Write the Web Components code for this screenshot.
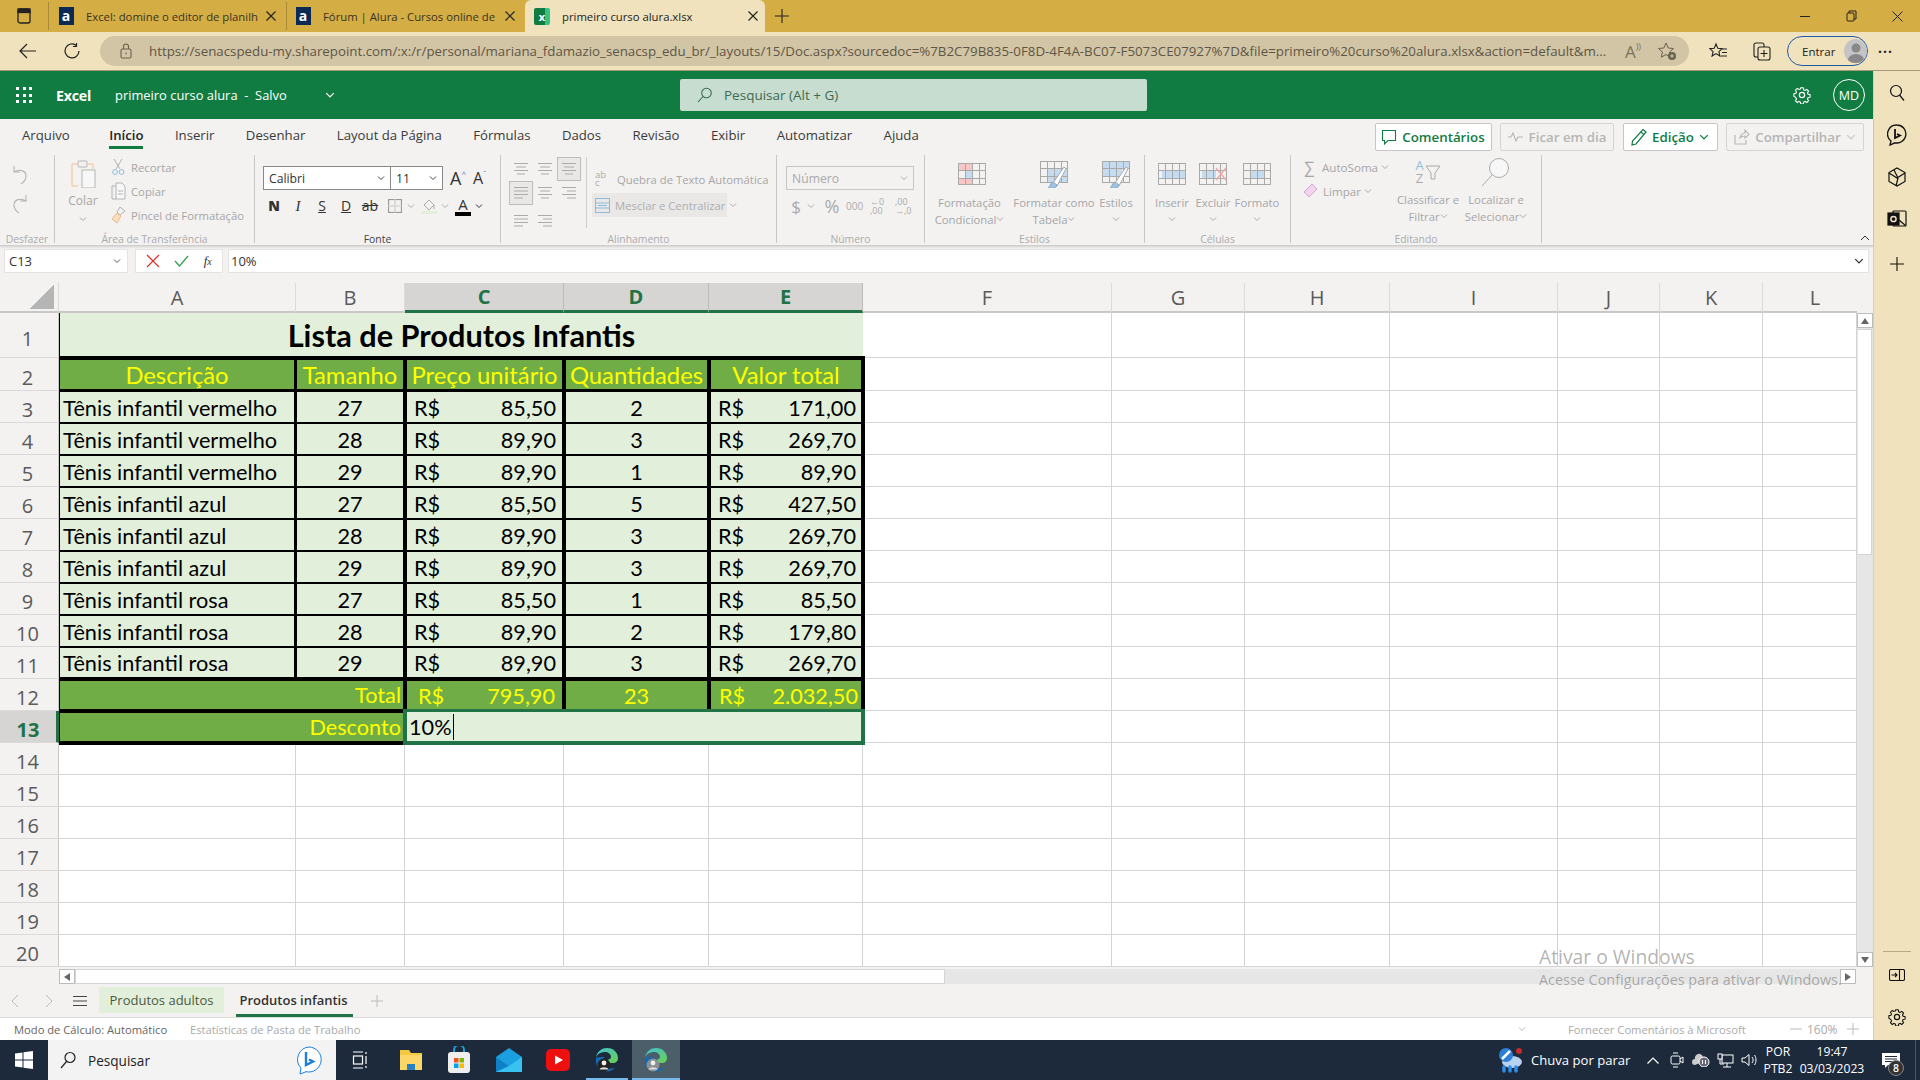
<!DOCTYPE html>
<html lang="pt-BR"><head><meta charset="utf-8"><title>primeiro curso alura.xlsx</title>
<style>
html,body{margin:0;padding:0;width:1920px;height:1080px;overflow:hidden;background:#f3f2f1}
body{display:flex;flex-direction:column;font-family:"Open Sans","Noto Sans",sans-serif}
#mid{display:flex;height:969px}
#app{display:flex;flex-direction:column;width:1873px;position:relative}
</style></head><body>
<x-tabstrip></x-tabstrip>
<x-toolbar></x-toolbar>
<div id="mid"><div id="app">
<x-appbar></x-appbar><x-ribbon></x-ribbon><x-formula></x-formula><x-sheet></x-sheet><x-sheettabs></x-sheettabs><x-status></x-status>
<x-watermark></x-watermark>
</div><x-sidebar></x-sidebar></div>
<x-taskbar></x-taskbar>
<script>
const base=`*{box-sizing:border-box}svg{display:block;flex:none}:host{display:block;box-sizing:border-box}`;
function el(name,css,html){customElements.define(name,class extends HTMLElement{
 constructor(){super();const s=this.attachShadow({mode:'open'});s.innerHTML=`<style>${base}${css}</style>${typeof html==='function'?html(this):html}`}})}
const svg=(w,h,b,c='currentColor',sw=1,vb)=>`<svg width="${w}" height="${h}" viewBox="${vb||`0 0 ${w} ${h}`}" fill="none" stroke="${c}" stroke-width="${sw}">${b}</svg>`;
const chev=(s=8,c='currentColor')=>svg(s,s,'<path d="M1 2.5 4 5.5 7 2.5"/>',c,1,'0 0 8 8');
const X=svg(12,12,'<path d="M1.5 1.5 10.5 10.5M10.5 1.5 1.5 10.5"/>','#222',1.2);
const lines=(t)=>{const L={l:[[0,14],[0,14],[0,14],[0,9]],c:[[0,14],[2,12],[0,14],[3,11]],r:[[0,14],[5,14],[0,14],[5,14]]}[t];return svg(16,14,L.map((a,i)=>`<path d="M${a[0]+1} ${1.5+i*3.5}H${a[1]+1}"/>`).join(''),'#ababab')};
const grid=(w,h,cx,cy,fills,c='#a9a9a9')=>{let b=fills.map(f=>`<rect x="${f[0]}" y="${f[1]}" width="${f[2]}" height="${f[3]}" fill="${f[4]}" stroke="none"/>`).join('');b+=`<rect x=".5" y=".5" width="${w-1}" height="${h-1}"/>`;for(let i=1;i<cx;i++){const x=Math.round(i*w/cx)+.5;b+=`<path d="M${x} 0V${h}"/>`}for(let i=1;i<cy;i++){const y=Math.round(i*h/cy)+.5;b+=`<path d="M0 ${y}H${w}"/>`}return svg(w,h,b,c)};
const brush=`<path d="M13 22 24 6l2 1.5L17 25" fill="#fff" stroke="#a9a9a9"/><path d="M13 21c-3 1-3 5-5 6 4 1 9 0 9-3z" fill="#9cc3e5" stroke="#8ab"/>`;
const gear='<circle cx="9" cy="9" r="2.6"/><path d="M7.6 1h2.8l.4 2.2 1.6.7 1.9-1.2 2 2-1.2 1.9.7 1.6 2.2.4v2.8l-2.2.4-.7 1.6 1.2 1.9-2 2-1.9-1.2-1.6.7-.4 2.2H7.6l-.4-2.2-1.6-.7-1.9 1.2-2-2 1.2-1.9-.7-1.6L0 10.4V7.6l2.2-.4.7-1.6L1.7 3.7l2-2 1.9 1.2 1.6-.7z" transform="translate(.9 .9) scale(.9)"/>';

/* ---------- browser tabs ---------- */
el('x-btab',`:host{display:flex;align-items:center;height:32px;font-size:11.3px;color:#3a3320;position:relative;flex:none}
 .fav{width:24px;display:flex;justify-content:center;flex:none}
 .t{flex:1;white-space:nowrap;overflow:hidden;margin-left:8px}
 .x{width:24px;display:flex;justify-content:center;flex:none}
 :host([active]){background:#f0e2bc;border-radius:6px 6px 0 0;color:#222}`,
 `<div class="fav"><slot name="fav"></slot></div><div class="t"><slot></slot></div><div class="x">${X}</div>`);
el('x-tabstrip',`:host{height:32px;background:#d4ad45;display:flex;align-items:center;flex:none}
 .side{width:48px;display:flex;justify-content:center}.sep{width:1px;height:28px;background:#a88a35;flex:none}
 .a{display:flex;align-items:center;justify-content:center;width:15px;height:18px;background:#0a2a55;color:#fff;font:700 14px "Open Sans",sans-serif;line-height:16px}
 .xl{display:flex;align-items:center;justify-content:center;width:16px;height:17px;background:linear-gradient(90deg,#107c41 70%,#33c481 70%);color:#fff;font:700 11px "Open Sans",sans-serif;border-radius:2px}
 .plus{margin-left:5px;width:24px;display:flex;justify-content:center}
 .ctl{margin-left:auto;display:flex}.ctl div{width:46px;height:32px;display:flex;align-items:center;justify-content:center}`,
 `<div class="side">${svg(14,16,'<rect x="1" y="1" width="12" height="14" rx="2"/><rect x="1" y="1" width="12" height="3.5" fill="#222"/>','#222',1.3)}</div><div class="sep"></div>
 <x-btab style="width:237px;padding:0 3px 0 5px"><span class="a" slot="fav">a</span>Excel: domine o editor de planilh</x-btab><div class="sep"></div>
 <x-btab style="width:238px;padding:0 3px 0 4px"><span class="a" slot="fav">a</span>Fórum | Alura - Cursos online de</x-btab>
 <x-btab active style="width:240px;padding-left:5px"><span class="xl" slot="fav">x</span><span>primeiro curso alura.xlsx</span></x-btab>
 <div class="plus">${svg(14,14,'<path d="M7 0V14M0 7H14"/>','#222',1.1)}</div>
 <div class="ctl"><div>${svg(10,10,'<path d="M0 5.5H10"/>','#222')}</div><div>${svg(11,12,'<rect x="1" y="3" width="7" height="8" rx="1"/><path d="M3 3V1H10V9H8"/>','#222')}</div><div>${svg(11,11,'<path d="M.5.5 10.5 10.5M10.5.5.5 10.5"/>','#222')}</div></div>`);

/* ---------- address bar ---------- */
el('x-toolbar',`:host{height:39px;background:#f0e2bc;border-bottom:1px solid #a8987a;display:flex;align-items:center;flex:none;color:#222}
 .b{width:44px;display:flex;justify-content:center}
 .url{margin-left:6px;width:1589px;height:30px;border-radius:15px;background:#d2c5a5;display:flex;align-items:center;padding-left:20px;color:#5d5545;font-size:13.3px;white-space:nowrap;position:relative}
 .u{margin-left:17px;width:1462px;overflow:hidden;color:#5e5646}
 .end{position:absolute;right:12px;display:flex;gap:16px;align-items:center}
 .fav{margin-left:7px;width:44px;display:flex;justify-content:center}
 .pill{margin-left:3px;width:81px;height:30px;border:1.5px solid #1f5aa6;border-radius:15px;display:flex;align-items:center;padding-left:14px;gap:9px;font-size:11.5px}
 .av{width:24px;height:24px;border-radius:50%;background:#c4c4c4;position:relative;overflow:hidden;display:flex;justify-content:center}
 .dots{margin-left:10px;font-size:14px;font-weight:700;letter-spacing:1px}`,
 `<div class="b" style="margin-left:6px">${svg(18,16,'<path d="M8 1 1 8l7 7M1 8H17"/>','#222',1.2)}</div>
 <div class="b">${svg(18,18,'<path d="M13.5 3.5A7 7 0 1 0 16 9M13.5 1V4.5H10"/>','#222',1.2)}</div>
 <div class="url">${svg(12,16,'<rect x="1" y="6" width="10" height="9" rx="1.5"/><path d="M3.5 6V3.5a2.5 2.5 0 0 1 5 0V6M6 9.5v2"/>','#6a6250',1.1)}
 <div class="u">https://senacspedu-my.sharepoint.com/:x:/r/personal/mariana_fdamazio_senacsp_edu_br/_layouts/15/Doc.aspx?sourcedoc=%7B2C79B835-0F8D-4F4A-BC07-F5073CE07927%7D&amp;file=primeiro%20curso%20alura.xlsx&amp;action=default&amp;m...</div>
 <div class="end"><span style="font-size:17px;color:#7b725e;line-height:1">A<span style="font-size:9px;vertical-align:8px">))</span></span>${svg(20,20,'<path d="M9 2l2.2 5 5.3.5-4 3.5 1.2 5.2L9 13.5 4.3 16.2 5.5 11l-4-3.5L6.8 7z"/><circle cx="15" cy="15" r="4" fill="#6a6250" stroke="none"/><path d="M15 13v4M13 15h4" stroke="#d2c5a5"/>','#6a6250')}</div></div>
 <div class="fav">${svg(19,18,'<path d="M7 2l1.8 4.2 4.4.4-3.3 3 1 4.4L7 11.6 3.1 14l1-4.4-3.3-3 4.4-.4zM13 7h5M13 10.5h5M12 14h6"/>','#222',1.1)}</div>
 <div class="fav" style="margin-left:0">${svg(20,20,'<rect x="6" y="6" width="12" height="13" rx="2"/><path d="M12 9v7M8.500 12.500h7M6 16H4a2 2 0 0 1-2-2V4a2 2 0 0 1 2-2h6a2 2 0 0 1 2 2v2"/>','#222',1.1)}</div>
 <div class="pill">Entrar<div class="av">${svg(24,24,'<circle cx="12" cy="9" r="4.5" fill="#888" stroke="none"/><ellipse cx="12" cy="21" rx="8" ry="6" fill="#888" stroke="none"/>')}</div></div>
 <div class="dots">···</div>`);

/* ---------- app bar ---------- */
el('x-appbar',`:host{height:48px;background:#107c41;color:#fff;display:flex;align-items:center;flex:none;position:relative;font-size:13px}
 .w{width:16px;height:16px;margin-left:16px;display:grid;grid-template-columns:repeat(3,3px);gap:3.5px}.w i{background:#fff;width:3px;height:3px}
 .e{margin-left:24px;font-weight:700;font-size:14.2px;letter-spacing:-.2px;width:59px}
 .n{width:175px;white-space:nowrap;font-size:12.9px}
 .c{margin-left:35px;width:209px}
 .s{margin-left:146px;width:467px;height:32px;background:#c7ddd0;border-radius:2px;display:flex;align-items:center;padding-left:17px;gap:12px;color:#3e6a52;font-size:13.5px}
 .r{margin-left:auto;display:flex;align-items:center;gap:22px;padding-right:8px}
 .md{width:32px;height:32px;border:1.2px solid #fff;border-radius:50%;display:flex;align-items:center;justify-content:center;font-size:12.5px}`,
 `<div class="w">${'<i></i>'.repeat(9)}</div><div class="e">Excel</div><div class="n">primeiro curso alura&nbsp; - &nbsp;Salvo</div><div class="c">${chev(10,'#fff')}</div>
 <div class="s">${svg(15,16,'<circle cx="9.5" cy="6" r="4.8"/><path d="M6 9.5 1 15"/>','#3e6a52',1.1)}<span>Pesquisar (Alt + G)</span></div>
 <div class="r">${svg(18,18,gear,'#fff',1.2)}<div class="md">MD</div></div>`);

/* ---------- ribbon ---------- */
el('x-group',`:host{display:flex;flex-direction:column;height:88px;border-right:1px solid #c8c6c4;flex:none}
 .b{flex:1;min-height:0;display:flex}.l{height:10px;text-align:center;font-size:10.4px;color:#ababab;white-space:nowrap;line-height:10px;margin-bottom:-1px}
 :host([on]) .l{color:#444}`,
 h=>`<div class="b"><slot></slot></div><div class="l">${h.getAttribute('label')}</div>`);
el('x-ribbon',`:host{height:127px;background:#f3f2f1;flex:none;border-bottom:1px solid #d0cecc;box-shadow:0 1px 2px #0002;position:relative;color:#a6a6a6;font-size:11.3px}
 .tabs{height:36px;display:flex;align-items:center;padding-left:22px;gap:31.4px;color:#3b3a39;font-size:13.2px;position:relative}
 .tabs span{position:relative;line-height:33px;height:36px;white-space:nowrap}
 .tabs .on{font-weight:600;color:#222;margin-left:8px}.tabs .on::after{content:"";position:absolute;left:0;right:0;bottom:6px;height:3px;background:#107c41}
 .btns{position:absolute;right:9px;top:4px;display:flex;gap:8.5px}
 .btn{height:28px;border:1px solid #c8c6c4;border-radius:2px;background:#fff;display:flex;align-items:center;justify-content:center;gap:5px;font-size:13.3px;font-weight:600;color:#107c41;white-space:nowrap}
 .btn.off{background:#f3f2f1;color:#b5b5b5;border-color:#d6d4d2}
 .g{display:flex;height:88px}
 .col{display:flex;flex-direction:column;align-items:center}
 .row{display:flex;align-items:center;height:24px;white-space:nowrap}
 .ctr{display:flex;flex-direction:column;align-items:center;padding-top:6px;flex:none}
 .ctr .tx{text-align:center;line-height:16px;white-space:nowrap;margin-top:8px}
 .ctr .tx i{display:inline-block;vertical-align:1px;font-style:normal}
 .ctr .tx i svg{display:inline-block}
 .ico{height:26px;display:flex;align-items:center;justify-content:center}
 .combo{height:24px;border:1px solid #8a8886;background:#fff;display:flex;align-items:center;justify-content:space-between;padding:0 5px;font-size:12.2px;color:#333}
 .fmt{display:flex;align-items:center;justify-content:center;width:24px;height:24px;font-size:15px;color:#333;flex:none;line-height:1}
 .al{display:flex;align-items:center;justify-content:center;width:24px;height:24px;flex:none}
 .al.act{background:#e9e8e7;border:1px solid #bdbdbd}
 .ac{position:absolute;right:3px;bottom:3px;color:#333}
 .wrap{display:flex;align-items:center;width:22px;font-size:9.5px;line-height:8px;color:#aaa;text-align:left;flex:none}`,
 `<div class="tabs"><span>Arquivo</span><span class="on">Início</span><span>Inserir</span><span>Desenhar</span><span>Layout da Página</span><span>Fórmulas</span><span>Dados</span><span>Revisão</span><span>Exibir</span><span>Automatizar</span><span>Ajuda</span>
 <div class="btns">
 <div class="btn" style="width:117px">${svg(16,16,'<path d="M1.5 1.5h13v10H7l-3.5 3.5v-3.5h-2z"/>','#107c41',1.1)}Comentários</div>
 <div class="btn off" style="width:114px">${svg(16,10,'<path d="M0 5h3l2-4 3 8 2-4h5"/>','#b5b5b5',1.1)}Ficar em dia</div>
 <div class="btn" style="width:95px">${svg(16,18,'<path d="M12 1.5 15 4 5 16l-4 1 .5-4zM10 4l3 2.6"/>','#107c41',1.2)}Edição ${chev(10,'#107c41')}</div>
 <div class="btn off" style="width:138px">${svg(16,16,'<path d="M1 6v9h11v-4M6 9c0-3 3-5 5-5V1l4 4.5L11 9V7c-2 0-4 .5-5 2z"/>','#b5b5b5',1.1)}Compartilhar ${chev(10,'#c8c8c8')}</div>
 </div></div>
 <div class="g">
 <x-group label="Desfazer" style="width:55px"><div class="col" style="width:40px;padding-top:10px;gap:9px">
  ${svg(16,20,'<path d="M2 1v6h6M2 7c5-3 12-2 12 4 0 3-2 6-5 8"/>','#b3b3b3',1.1)}${svg(16,20,'<path d="M14 1v6H8M14 7C9 4 2 5 2 11c0 3 2 6 5 8"/>','#b3b3b3',1.1)}</div></x-group>
 <x-group label="Área de Transferência" style="width:200px">
  <div class="ctr" style="width:56px;padding-top:5px">${svg(28,28,'<path d="M3 4h5M19 4h5v5M3 4v22h6" stroke="#f0c28a"/><rect x="9" y="1" width="9" height="6" rx="1" stroke="#b5b5b5"/><rect x="13" y="10" width="13" height="18" fill="#f7f7f7" stroke="#b5b5b5"/>')}
   <div style="margin-top:4px;font-size:12px">Colar</div><div style="margin-top:6px">${chev(8,'#a8a8a8')}</div></div>
  <div style="display:flex;flex-direction:column;padding:0 0 0 0">
   <div class="row" style="gap:5px">${svg(15,18,'<path d="M3 1l6 10M11 1 5 11"/><circle cx="4" cy="14" r="2.4" stroke="#8dbbdd"/><circle cx="10.5" cy="14" r="2.4" stroke="#8dbbdd"/>','#b3b3b3')}Recortar</div>
   <div class="row" style="gap:5px">${svg(15,18,'<path d="M5 4H1v13h4"/><path d="M5 1h6l3 3v13H5z" fill="#f7f7f7"/><path d="M7 9h5M7 12h5"/>','#b3b3b3')}Copiar</div>
   <div class="row" style="gap:5px">${svg(15,18,'<path d="M9 1 14 5 9 9 6 6z" stroke="#b3b3b3"/><path d="M6 7 10 10 6 17 1 13z" fill="#f9dfc0" stroke="#eebb85"/>')}Pincel de Formatação</div>
  </div></x-group>
 <x-group on label="Fonte" style="width:246px"><div style="padding:11px 0 0 8px">
  <div style="display:flex;align-items:center"><div class="combo" style="width:128px">Calibri${chev(8,'#444')}</div><div class="combo" style="width:52px;border-left:0">11${chev(8,'#444')}</div>
   <span style="font-size:18px;color:#333;margin-left:7px;line-height:1">A<sup style="font-size:8px;vertical-align:8px;color:#4a7ab0;line-height:0">^</sup></span><span style="font-size:16px;color:#333;margin-left:7px;line-height:1">A<sup style="font-size:8px;vertical-align:8px;color:#4a7ab0;line-height:0">ˇ</sup></span></div>
  <div style="display:flex;align-items:center;margin-top:4px;margin-left:-1px">
   <span class="fmt" style="font-weight:800;font-size:14px">N</span><span class="fmt" style="font-style:italic;font-family:'Liberation Serif',serif">I</span><span class="fmt" style="text-decoration:underline;font-size:14px">S</span><span class="fmt" style="text-decoration:underline;font-size:14px">D</span><span class="fmt" style="text-decoration:line-through;font-size:14px">ab</span>
   <span class="fmt" style="margin-left:1px">${svg(14,14,'<rect x=".5" y=".5" width="13" height="13"/><path d="M7 0V14M0 7H14" stroke="#ccc"/>','#999',1.2)}</span><span style="margin-left:0">${chev(8,'#aaa')}</span>
   <span class="fmt" style="margin-left:2px;flex-direction:column">${svg(16,13,'<path d="M3 7 8 2l5 5-5 5z"/><path d="M13 7v4"/>','#aaa')}<i style="width:16px;height:3px;background:#e2efda;display:block"></i></span><span>${chev(8,'#aaa')}</span>
   <span class="fmt" style="margin-left:2px;flex-direction:column;font-size:15px;line-height:15px">A<i style="width:16px;height:4px;background:#000;display:block"></i></span><span>${chev(8,'#333')}</span>
  </div></div></x-group>
 <x-group label="Alinhamento" style="width:276px"><div style="display:flex;padding:2px 0 0 8px">
  <div style="width:69px;display:grid;grid-template-columns:repeat(3,24px);grid-auto-rows:24px;height:72px;margin-top:0">
   <div class="al">${lines('c')}</div><div class="al">${lines('c')}</div><div class="al act">${lines('c')}</div>
   <div class="al act">${lines('l')}</div><div class="al">${lines('c')}</div><div class="al">${lines('r')}</div>
   <div class="al" style="margin-top:4px">${lines('l')}</div><div class="al" style="margin-top:4px">${lines('r')}</div>
  </div>
  <div style="width:1px;height:71px;background:#d0cecc;margin-left:8px"></div>
  <div style="display:flex;flex-direction:column;margin-left:5px;padding-top:10px">
   <div class="row" style="gap:0;padding-left:3px"><span class="wrap">ab<br>c</span>Quebra de Texto Automática</div>
   <div class="row" style="background:#e9e8e7;width:147px;margin-top:2px;gap:5px;padding-left:3px;color:#aeaeae;position:relative">${svg(15,15,'<rect x=".5" y=".5" width="14" height="14"/><path d="M0 5H15M0 10H15M3 7.5h9" stroke="#8dbbdd"/>','#8dbbdd')}Mesclar e Centralizar<span style="position:absolute;right:0;width:12px;height:24px;background:#f3f2f1;display:flex;align-items:center;justify-content:center">${chev(8,'#aaa')}</span></div>
  </div></div></x-group>
 <x-group label="Número" style="width:148px"><div style="padding:11px 0 0 9px">
  <div class="combo" style="width:128px;border-color:#c8c6c4;background:#f3f2f1;color:#aaa">Número${chev(8,'#aaa')}</div>
  <div style="display:flex;align-items:center;height:24px;margin-top:4px;padding-left:3px;color:#aaa">
   <span style="font-size:17px;width:14px;text-align:center">$</span><span style="margin-left:4px">${chev(8,'#aaa')}</span><span style="font-size:18px;margin-left:5px;width:24px;text-align:center">%</span><span style="font-size:10px;margin-left:2px;width:18px">000</span>
   <span style="margin-left:6px;font-size:9px;line-height:9px;width:18px;color:#aaa">←0<br>,00</span><span style="margin-left:7px;font-size:9px;line-height:9px;color:#aaa">,00<br>→,0</span>
  </div></div></x-group>
 <x-group label="Estilos" style="width:220px">
  <div class="ctr" style="width:89px"><div class="ico" style="margin-left:4px">${grid(28,22,4,3,[[0,0,14,7,'#f7c7c7'],[7,7,7,8,'#c5dcf0'],[0,15,14,7,'#f7c7c7']])}</div><div class="tx">Formatação<br>Condicional<i>${chev(8,'#aaa')}</i></div></div>
  <div class="ctr" style="width:80px"><div class="ico">${svg(28,27,grid(28,22,4,3,[[7,7,21,15,'#c5dcf0']]).replace(/<\/?svg[^>]*>/g,'')+brush,'#a9a9a9')}</div><div class="tx">Formatar como<br>Tabela<i>${chev(8,'#aaa')}</i></div></div>
  <div class="ctr" style="width:40px;margin-left:2px"><div class="ico">${svg(28,27,grid(28,22,4,3,[[0,0,28,7,'#c5dcf0'],[0,7,20,8,'#c5dcf0']]).replace(/<\/?svg[^>]*>/g,'')+brush,'#a9a9a9')}</div><div class="tx">Estilos<br><i>${chev(8,'#aaa')}</i></div></div>
 </x-group>
 <x-group label="Células" style="width:146px"><div style="width:6px"></div>
  <div class="ctr" style="width:42px"><div class="ico">${grid(28,22,4,3,[[4,7,24,8,'#c5dcf0']])}</div><div class="tx">Inserir<br><i>${chev(8,'#aaa')}</i></div></div>
  <div class="ctr" style="width:40px"><div class="ico">${svg(28,22,grid(28,22,4,3,[[3,7,14,8,'#c5dcf0']]).replace(/<\/?svg[^>]*>/g,'')+'<path d="M17 5 27 17M27 5 17 17" stroke="#f2a3a3" stroke-width="1.2"/>','#a9a9a9')}</div><div class="tx">Excluir<br><i>${chev(8,'#aaa')}</i></div></div>
  <div class="ctr" style="width:48px"><div class="ico">${grid(28,22,4,3,[[7,7,14,8,'#c5dcf0']])}</div><div class="tx">Formato<br><i>${chev(8,'#aaa')}</i></div></div>
 </x-group>
 <x-group label="Editando" style="width:251px">
  <div style="width:104px;padding:0 0 0 13px;display:flex;flex-direction:column">
   <div class="row" style="gap:3px;font-size:11.6px"><span style="font-size:16px;width:15px;line-height:1">∑</span>AutoSoma ${chev(8,'#aaa')}</div>
   <div class="row" style="gap:3px;font-size:11.6px;margin-left:-2px">${svg(16,16,'<path d="M10 1 15 6 7 14 2 9z" fill="#f1d5ee" stroke="#d7a6d2"/>')}<span style="margin-left:2px">Limpar</span> ${chev(8,'#aaa')}</div>
  </div>
  <div class="ctr" style="width:66px;padding-top:3px"><div class="ico" style="height:28px"><div style="display:flex;align-items:center;gap:1px"><span style="font-size:13px;line-height:13px;text-align:center;color:#8dbbdd">A<br><span style="color:#aaa">Z</span></span>${svg(16,16,'<path d="M1 2H15L10 9v6H6V9z"/>','#aaa')}</div></div><div class="tx" style="margin-top:6px">Classificar e<br>Filtrar<i>${chev(8,'#aaa')}</i></div></div>
  <div class="ctr" style="width:70px;padding-top:3px"><div class="ico" style="height:28px">${svg(30,30,'<circle cx="18" cy="11" r="9.5" fill="#f7f7f7"/><path d="M11 18 1 29"/>','#aaa')}</div><div class="tx" style="margin-top:6px">Localizar e<br>Selecionar<i>${chev(8,'#aaa')}</i></div></div>
 </x-group>
 </div>
 <div class="ac">${svg(10,8,'<path d="M1 6 5 2l4 4"/>','#333')}</div>`);

/* ---------- formula bar ---------- */
el('x-formula',`:host{height:37px;background:#f3f2f1;flex:none;display:flex;padding:3px 4px 0;gap:7px;font-size:13px;color:#333}
 div.b{height:24px;background:#fff;border:1px solid #e4e3e2;display:flex;align-items:center}`,
 `<div class="b" style="width:124px;padding:0 6px 0 4px;justify-content:space-between">C13${chev(8,'#555')}</div>
 <div class="b" style="width:88px;justify-content:space-around;padding:0 3px">${svg(14,14,'<path d="M1 1 13 13M13 1 1 13"/>','#d9302c',1.2)}${svg(15,12,'<path d="M1 6 5.5 11 14 1"/>','#2e9e47',1.2)}<span style="font:italic 13px 'Liberation Serif',serif;color:#333">f<span style="font-size:10px">x</span></span></div>
 <div class="b" style="flex:1;margin-left:-2px;padding:0 4px 0 2px;justify-content:space-between"><span>10%</span>${chev(10,'#333')}</div>`);

/* ---------- sheet ---------- */
const colW=[59,237,109,159,145,154,249,133,145,168,102,103,94];
const rowH=[30,45,33,...Array(18).fill(32)];
const names='ABCDEFGHIJKL'.split('');
const money=(a,b)=>`<span>${a}</span><span>${b}</span>`;
const data=[['Tênis infantil vermelho','27','85,50','2','171,00'],['Tênis infantil vermelho','28','89,90','3','269,70'],['Tênis infantil vermelho','29','89,90','1','89,90'],['Tênis infantil azul','27','85,50','5','427,50'],['Tênis infantil azul','28','89,90','3','269,70'],['Tênis infantil azul','29','89,90','3','269,70'],['Tênis infantil rosa','27','85,50','1','85,50'],['Tênis infantil rosa','28','89,90','2','179,80'],['Tênis infantil rosa','29','89,90','3','269,70']];
/* ink of the table rules around each grid line: [before, after] */
const H={1:[2,2],2:[2,1],11:[2,2],12:[2,2],13:[2,2]};
const hl=r=>H[r]||[1,1];
const V=[[0,1],[2,1],[2,2],[2,2],[2,2],[2,2]]; /* left of A, A|B, B|C, C|D, D|E, right of E */
const ink=(r,c0,c1)=>{const t=hl(r-1),b=hl(r),l=V[c0],e=V[c1];
 return `margin:${-t[0]}px ${-e[1]}px ${-b[1]}px ${-l[0]}px;border-width:${t[0]+t[1]}px ${e[0]+e[1]}px ${b[0]+b[1]}px ${l[0]+l[1]}px;grid-column:span ${c1-c0}`};
function sheetCells(){let h='<div class="ch corner"><i></i></div>';
 names.forEach((n,i)=>{h+=`<div class="ch${i>=2&&i<=4?' sel':''}${i===11?' last':''}">${n}</div>`});
 for(let r=1;r<=20;r++){h+=`<div class="rh${r===13?' sel':''}">${r}</div>`;
  let s=0;
  if(r===1){h+='<div class="c title" style="grid-column:span 5">Lista de Produtos Infantis</div>';s=5}
  else if(r===2){['Descrição','Tamanho','Preço unitário','Quantidades','Valor total'].forEach((t,i)=>h+=`<div class="c k head" style="${ink(r,i,i+1)}">${t}</div>`);s=5}
  else if(r<=11){const d=data[r-3];h+=`<div class="c k txt" style="${ink(r,0,1)}">${d[0]}</div><div class="c k mid" style="${ink(r,1,2)}">${d[1]}</div><div class="c k mon m1" style="${ink(r,2,3)}">${money('R$',d[2])}</div><div class="c k mid" style="${ink(r,3,4)}">${d[3]}</div><div class="c k mon" style="${ink(r,4,5)}">${money('R$',d[4])}</div>`;s=5}
  else if(r===12){h+=`<div class="c k g rt" style="${ink(r,0,2)}">Total</div><div class="c k g mon m1" style="${ink(r,2,3)}">${money('R$','795,90')}</div><div class="c k g mid" style="${ink(r,3,4)}">23</div><div class="c k g mon" style="${ink(r,4,5)}">${money('R$','2.032,50')}</div>`;s=5}
  else if(r===13){h+=`<div class="c k g rt" style="${ink(r,0,2)}">Desconto</div><div class="c edit" style="grid-column:span 3"><span>10%</span><b></b></div>`;s=5}
  for(let i=s;i<12;i++)h+=`<div class="c e"></div>`;
 }return h}
el('x-sheet',`:host{height:701px;background:#f3f2f1;flex:none;display:flex;flex-direction:column;overflow:hidden}
 .top{display:flex;height:684px}
 .grid{display:grid;width:1857px;grid-template-columns:${colW.map(w=>w+'px').join(' ')};grid-template-rows:${rowH.map(w=>w+'px').join(' ')};background:#fff;font-family:Lato,"Liberation Sans",sans-serif;font-size:21.7px;color:#000;overflow:hidden}
 .ch{background:#f3f2f1;border-right:1px solid #dcdbda;border-bottom:2px solid #c9c8c7;display:flex;align-items:center;justify-content:center;font:400 20px "Open Sans",sans-serif;color:#5a5a5a}
 .ch.last{padding-left:10px;border-right:0}
 .ch.sel{background:#d6d5d3;color:#217346;font-weight:700;border-bottom:3px solid #217346;border-right-color:#bbb}
 .corner{justify-content:flex-end;align-items:flex-end;padding:0 4px 2px 0}.corner i{width:24px;height:24px;background:linear-gradient(135deg,transparent 50%,#b5b5b5 50%);display:block}
 .rh{background:#f3f2f1;border-right:1px solid #c9c8c7;border-bottom:1px solid #dcdbda;display:flex;align-items:center;justify-content:center;font:400 20px "Open Sans",sans-serif;color:#5a5a5a;padding-top:6px;padding-right:3px}
 .rh.sel{background:#d6d5d3;color:#217346;font-weight:700;border-right:3px solid #217346;padding-right:0}
 .c{display:flex;align-items:center;white-space:nowrap;min-width:0}
 .e{border-right:1px solid #d4d4d4;border-bottom:1px solid #d4d4d4}
 .title{background:#e2efda;justify-content:center;font-weight:700;font-size:30.7px;border-left:1px solid #000}
 .k{background:#e2efda;border-style:solid;border-color:#000;position:relative}
 .head{background:#70ad47;color:#ff0;justify-content:center;font-size:23.8px}
 .txt{padding:1px 0 0 3px}.mid{justify-content:center;padding-top:1px}
 .mon{justify-content:space-between;padding:1px 5px 0 7px}
 .m1{padding:1px 6px 0 7px}
 .g{background:#70ad47;color:#ff0}
 .g.mon{padding:1px 3px 0 8px}
 .g.m1{padding:1px 7px 0 11px}
 .rt{justify-content:flex-end;padding-right:2px}
 .edit{background:#e2efda;border:solid #217346;border-width:3px 4px 4px 4px;margin:-2px -2px -2px -2px;padding:1px 0 0 2px;position:relative;z-index:2}
 .edit b{width:1px;height:26px;background:#000;margin-left:1px}
 .vs{width:16px;margin-top:30px;background:#e6e6e6;position:relative;display:flex;flex-direction:column;justify-content:space-between}
 .ar{width:16px;height:15px;background:#fff;border:1px solid #bdbdbd;display:flex;align-items:center;justify-content:center;color:#666}
 .th{position:absolute;left:0;top:16px;width:15px;height:226px;background:#fff;border:1px solid #d4d4d4;border-left-color:#e6e6e6}
 .hs{height:15px;margin:2px 33px 0 59px;background:#e6e6e6;display:flex;justify-content:space-between;position:relative}
 .hs .ar{width:16px}
 .hs .thumb{position:absolute;left:16px;top:0;width:870px;height:15px;background:#fff;border:1px solid #d4d4d4}`,
 `<div class="top"><div class="grid">${sheetCells()}</div>
 <div class="vs"><div class="ar">${svg(8,6,'<path d="M0 6 4 0l4 6z" fill="#666" stroke="none"/>')}</div><div class="th"></div><div class="ar">${svg(8,6,'<path d="M0 0 4 6l4-6z" fill="#666" stroke="none"/>')}</div></div></div>
 <div class="hs"><div class="ar">${svg(6,8,'<path d="M6 0 0 4l6 4z" fill="#666" stroke="none"/>')}</div><div class="thumb"></div><div class="ar" style="margin-right:-16px;position:relative">${svg(6,8,'<path d="M0 0 6 4 0 8z" fill="#666" stroke="none"/>')}</div></div>`);

/* ---------- sheet tabs + status ---------- */
el('x-sheettabs',`:host{height:34px;background:#f3f2f1;flex:none;display:flex;font-size:13px;color:#444;border-bottom:1px solid #dedcda}
 .n{display:flex;align-items:center;height:33px}
 .t{height:26px;margin-top:3px;display:flex;align-items:center;justify-content:center;white-space:nowrap}`,
 `<div class="n" style="width:99px;padding-left:11px;gap:26px">${svg(8,14,'<path d="M7 1 1 7l6 6"/>','#bbb')}${svg(8,14,'<path d="M1 1l6 6-6 6"/>','#bbb')}<span style="margin-left:-6px">${svg(14,12,'<path d="M0 1.5H14M0 6H14M0 10.5H14"/>','#444',1.2)}</span></div>
 <div class="t" style="width:125px;background:#e2efda;color:#4a5a3e">Produtos adultos</div>
 <div style="margin-left:12px;width:117px;height:33px;border-bottom:3px solid #217346;padding-top:3px"><div class="t" style="height:26px;margin:0 0 0 -2px;font-weight:600;color:#333">Produtos infantis</div></div>
 <div class="n" style="margin-left:17px">${svg(14,14,'<path d="M7 1V13M1 7H13"/>','#bbb')}</div>`);
el('x-status',`:host{height:22px;background:#fff;flex:none;display:flex;align-items:center;font-size:11.2px;color:#666;white-space:nowrap}
 .off{color:#aaa}`,
 `<span style="margin-left:14px;width:176px">Modo de Cálculo: Automático</span><span class="off" style="width:1328px">Estatísticas de Pasta de Trabalho</span>
 <span style="width:50px">${chev(8,'#bbb')}</span><span class="off" style="width:222px">Fornecer Comentários à Microsoft</span>
 <span>${svg(12,2,'<path d="M0 1H12"/>','#bbb')}</span><span class="off" style="margin-left:5px;width:40px;font-size:12px">160%</span><span>${svg(12,12,'<path d="M6 0V12M0 6H12"/>','#bbb')}</span>`);
el('x-watermark',`:host{position:absolute;left:1539px;top:873px;color:rgba(70,70,70,.42);pointer-events:none;white-space:nowrap}
 .a{font-size:19.300px;line-height:26px}.b{font-size:14.4px;line-height:20px;margin-top:0}`,
 `<div class="a">Ativar o Windows</div><div class="b">Acesse Configurações para ativar o Windows.</div>`);

/* ---------- sidebar ---------- */
el('x-sidebar',`:host{width:47px;background:#f0e2bc;display:flex;flex-direction:column;align-items:center;color:#111;flex:none;padding-top:13px;border-left:1px solid #ddd0aa}
 .i{height:42px;display:flex;align-items:center;justify-content:center}`,
 `<div class="i" style="height:18px;margin-bottom:12px">${svg(16,18,'<circle cx="7" cy="7" r="5.5"/><path d="M10.5 11 15 16.5"/>','#111',1.2)}</div>
 <div class="i">${svg(20,22,'<path d="M10 1a9 9 0 1 1-2 17.8L3 21l1-4A9 9 0 0 1 10 1z"/><path d="M8 5v9l5-2.5-3-1.5" stroke-width="1.8"/>','#111',1.3)}</div>
 <div class="i">${svg(20,20,'<path d="M10 1l8 4.5v9L10 19l-8-4.5v-9z"/><path d="M2 6l8 5 8-5M7 3l4 8-2 8"/>','#111',1.2)}</div>
 <div class="i">${svg(20,20,'<rect x="6" y="2" width="13" height="15" rx="1"/><rect x="1" y="4" width="11" height="12" fill="#111"/><circle cx="6.5" cy="10" r="2.6" stroke="#f0e2bc" stroke-width="1.5"/><path d="M12 11l7 6"/>','#111',1.2)}</div>
 <div class="i" style="height:18px;margin-top:15px">${svg(14,14,'<path d="M7 0V14M0 7H14"/>','#111',1.1)}</div>
 <div style="flex:1"></div>
 <div style="width:28px;height:1px;background:#b9a97f;margin-bottom:16px"></div>
 <div class="i" style="height:14px;margin-bottom:26px">${svg(16,12,'<rect x=".5" y=".5" width="15" height="11" rx="1.5"/><path d="M10.5 0V12M2.5 6H8M6 4l2 2-2 2"/>','#111',1.1)}</div>
 <div class="i" style="height:18px;margin-bottom:14px">${svg(18,18,gear,'#111',1.2)}</div>`);

/* ---------- taskbar ---------- */
const edge=(id,face)=>`<svg width="24" height="26" viewBox="0 0 24 26" fill="none"><defs><linearGradient id="${id}" x1="0" y1="0" x2="1" y2="1"><stop offset="0" stop-color="#3fc1d8"/><stop offset="1" stop-color="#6bd14d"/></linearGradient></defs><path d="M1 11C2 4 7 1 12 1c7 0 11 5 11 10 0 3-2 5-5 5H10c0-4 6-3 6-6 0-3-3-5-6-5-4 0-8 2-9 6z" fill="url(#${id})"/><path d="M1 11c-1 6 2 12 8 13 4 1 8 0 11-3-4 1-9 1-11-3-2-3-1-7 1-8-5 0-8 0-9 1z" fill="#1269b5"/><circle cx="9" cy="18" r="6.5" fill="${face}"/><circle cx="9" cy="16" r="2.4" fill="#eee"/><path d="M4.5 22.5c1-3 8-3 9 0" fill="#ddd"/></svg>`;
el('x-taskbar',`:host{height:40px;background:#1c2a3c;flex:none;display:flex;align-items:center;color:#fff;position:relative}
 .st{width:48px;display:flex;justify-content:center}
 .s{width:288px;height:40px;background:#f3f3f3;color:#222;display:flex;align-items:center;padding-left:12px;gap:12px;font-size:13.6px;position:relative}
 .ap{width:48px;height:40px;display:flex;align-items:center;justify-content:center;position:relative;flex:none}
 .ap.u::after{content:"";position:absolute;bottom:0;left:3px;right:3px;height:2px;background:#76b9ed}
 .ap.act{background:#4b5e69}.ap.act::after{left:0;right:0}
 .tray{margin-left:auto;display:flex;align-items:center;height:40px;font-size:13.1px;flex:none}
 .tray>span{flex:none}
 .c2{text-align:center;line-height:17px;font-size:12.2px;flex:none}`,
 `<div class="st"><svg width="18" height="18" viewBox="0 0 18 18" fill="#fff"><path d="M0 2.5 7.5 1.4V8.5H0zM8.5 1.3 18 0V8.5H8.5zM0 9.5H7.5V16.6L0 15.5zM8.5 9.500H18V18L8.500 16.700z"/></svg></div>
 <div class="s">${svg(16,18,'<circle cx="10" cy="6.5" r="5"/><path d="M6.5 10.5 1 17"/>','#222',1.2)}<span>Pesquisar</span>
  <span style="position:absolute;right:12px">${svg(30,30,'<path d="M15 2a12.500 12.500 0 1 1-3 24.700L6 29l1-6A12.500 12.500 0 0 1 15 2z" stroke="#1b7fd6" fill="#fff"/><path d="M12 7v13l7-3.500-4-2" stroke="#1b7fd6" stroke-width="2.4"/>')}</span></div>
 <div class="ap">${svg(16,20,'<rect x="1.500" y="6" width="9" height="8"/><path d="M1 2H11M1 18H11M14 2v2M14 6v8M14 16v2"/>','#fff',1.2)}</div>
 <div class="ap" style="margin-left:3px"><svg width="24" height="22" viewBox="0 0 24 22"><path d="M1 1h9l2 3h11v17H1z" fill="#f5c842"/><rect x="1" y="6" width="22" height="15" fill="#fcd768"/><path d="M8 21v-6h8v6z" fill="#2a7fc0"/></svg></div>
 <div class="ap"><svg width="24" height="28" viewBox="0 0 24 28"><path d="M7 8V4a5 5 0 0 1 10 0v4" fill="none" stroke="#1b9fd8" stroke-width="2"/><rect x="1" y="6" width="22" height="21" rx="3" fill="#eee"/><rect x="7" y="12" width="4.500" height="4.500" fill="#f25022"/><rect x="12.500" y="12" width="4.500" height="4.500" fill="#7fba00"/><rect x="7" y="17.500" width="4.500" height="4.500" fill="#00a4ef"/><rect x="12.500" y="17.500" width="4.500" height="4.500" fill="#ffb900"/></svg></div>
 <div class="ap" style="margin-left:2px"><svg width="26" height="24" viewBox="0 0 26 24"><path d="M0 9 13 0l13 9v15H0z" fill="#1b9fe0"/><path d="M0 9l13 9 13-9v15H0z" fill="#39c2f0"/><path d="M0 9l13 9L0 24z" fill="#0f7fc8"/></svg></div>
 <div class="ap" style="margin-left:1px"><svg width="24" height="24" viewBox="0 0 24 24"><rect y="1" width="24" height="22" rx="5" fill="#ee0f0f"/><path d="M9 7.500 17 12 9 16.500z" fill="#fff"/></svg></div>
 <div class="ap u" style="margin-left:1px">${edge('e1','#222')}</div>
 <div class="ap u act" style="margin-left:1px">${edge('e2','#8a8f93')}</div>
 <div class="tray">
  <span style="margin-right:8px"><svg width="26" height="26" viewBox="0 0 26 26"><ellipse cx="15" cy="15" rx="10" ry="6" fill="#b7d3ef"/><circle cx="9" cy="8" r="7" fill="#2d7fd6"/><path d="M5 12 13 4" stroke="#fff" stroke-width="2.500"/><circle cx="22" cy="4" r="3" fill="#c62a2a"/><path d="M7 20v4M13 20v4M19 20v4" stroke="#2d8bea" stroke-width="3.500" stroke-linecap="round"/></svg></span>
  <span style="width:110px;white-space:nowrap">Chuva por parar</span>
  <span style="width:24px;display:flex;justify-content:center">${svg(12,7,'<path d="M.5 6.500 6 1l5.500 5.500"/>','#fff',1.2)}</span>
  <span style="width:24px;display:flex;justify-content:center">${svg(14,18,'<rect x="1" y="5" width="9" height="8" rx="1.500"/><path d="M10 8l3-2v6l-3-2M3 2h5M3 16h5"/>','#fff')}</span>
  <span style="width:24px;display:flex;justify-content:center">${svg(18,14,'<path d="M3 12a3 3 0 0 1 0-6 4 4 0 0 1 8-2 3 3 0 0 1 4 3" fill="#ccc" stroke="none"/><circle cx="12" cy="9" r="5" fill="#667"/><path d="M10.500 7v4M13.500 7v4" stroke="#fff"/>')}</span>
  <span style="width:24px;display:flex;justify-content:center">${svg(17,15,'<rect x="5" y="2" width="11" height="8"/><rect x="1" y="1" width="4" height="5" fill="#1c2a3c"/><path d="M10 10v4M6 14h8M3 6v5H7"/>','#fff')}</span>
  <span style="width:24px;display:flex;justify-content:center">${svg(16,14,'<path d="M1 5h3l4-3.500v11L4 9H1zM11 4c1.500 2 1.500 4 0 6M13.500 2c2 3 2 7 0 10"/>','#fff')}</span>
  <div class="c2" style="width:36px;margin-left:-1px">POR<br>PTB2</div>
  <div class="c2" style="width:72px">19:47<br>03/03/2023</div>
  <span style="width:46px;display:flex;justify-content:center;position:relative;margin-right:1px">${svg(18,15,'<path d="M0 0H18V12H6L3 15V12H0z" fill="#fff" stroke="none"/><path d="M3 3.500H15M3 6H15M3 8.500H11" stroke="#1c2a3c"/>')}<span style="position:absolute;left:20px;top:7px;width:16px;height:16px;border-radius:50%;background:#333;border:1px solid #888;font-size:10.500px;display:flex;align-items:center;justify-content:center;font-weight:600">8</span></span>
  <span style="width:1px;height:40px;background:#44566a"></span><span style="width:4px"></span>
 </div>`);
</script>
</body></html>
